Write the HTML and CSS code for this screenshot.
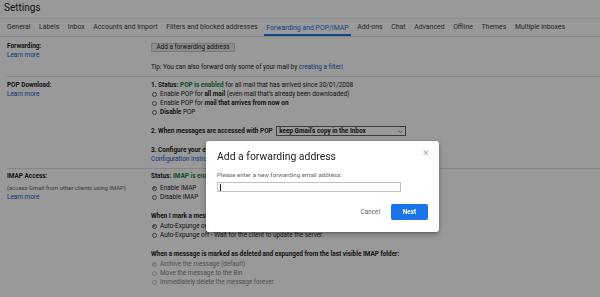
FILE: index.html
```html
<!DOCTYPE html>
<html>
<head>
<meta charset="utf-8">
<title>Settings</title>
<link rel="stylesheet" href="styles.css">
</head>
<body>
<div class="page">
  <div class="title">Settings</div>
  <nav class="tabs">
    <span class="tab">General</span>
    <span class="tab">Labels</span>
    <span class="tab">Inbox</span>
    <span class="tab">Accounts and Import</span>
    <span class="tab">Filters and blocked addresses</span>
    <span class="tab active">Forwarding and POP/IMAP</span>
    <span class="tab">Add-ons</span>
    <span class="tab">Chat</span>
    <span class="tab">Advanced</span>
    <span class="tab">Offline</span>
    <span class="tab">Themes</span>
    <span class="tab">Multiple inboxes</span>
  </nav>

  <section class="row row-fwd">
    <div class="label">
      <div class="line b">Forwarding:</div>
      <div class="line"><a class="link">Learn more</a></div>
    </div>
    <div class="content">
      <button class="btn">Add a forwarding address</button>
      <div class="line tip">Tip: You can also forward only some of your mail by <a class="link">creating a filter!</a></div>
    </div>
  </section>

  <section class="row row-pop">
    <div class="label">
      <div class="line b">POP Download:</div>
      <div class="line"><a class="link">Learn more</a></div>
    </div>
    <div class="content">
      <div class="line"><b>1. Status:</b> <span class="green">POP is enabled</span> for all mail that has arrived since 30/01/2008</div>
      <div class="line opt"><span class="radio"></span>Enable POP for&nbsp;<b>all mail</b>&nbsp;(even mail that's already been downloaded)</div>
      <div class="line opt"><span class="radio"></span>Enable POP for&nbsp;<b>mail that arrives from now on</b></div>
      <div class="line opt"><span class="radio"></span><b>Disable</b>&nbsp;POP</div>
      <div class="select-row"><b>2. When messages are accessed with POP</b>
        <span class="select">keep Gmail's copy in the Inbox
          <svg class="chev" viewBox="0 0 10 6" width="5" height="3"><path d="M1 1l4 4 4-4" fill="none" stroke="#5f6368" stroke-width="1.4"/></svg>
        </span>
      </div>
      <div class="line step3"><b>3. Configure your email client</b> (e.g. Outlook, Eudora, Netscape Mail)</div>
      <div class="line"><a class="link">Configuration instructions</a></div>
    </div>
  </section>

  <section class="row row-imap">
    <div class="label">
      <div class="line b">IMAP Access:</div>
      <div class="line small">(access Gmail from other clients using IMAP)</div>
      <div class="line"><a class="link">Learn more</a></div>
    </div>
    <div class="content">
      <div class="line status"><b>Status:</b> <span class="green">IMAP is enabled</span></div>
      <div class="line opt"><span class="radio on"></span>Enable IMAP</div>
      <div class="line opt"><span class="radio"></span>Disable IMAP</div>
      <div class="line b group">When I mark a message in IMAP as deleted:</div>
      <div class="line opt"><span class="radio on"></span>Auto-Expunge on - Immediately update the server. (default)</div>
      <div class="line opt"><span class="radio"></span>Auto-Expunge off - Wait for the client to update the server.</div>
      <div class="line b group">When a message is marked as deleted and expunged from the last visible IMAP folder:</div>
      <div class="line opt dis"><span class="radio on"></span>Archive the message (default)</div>
      <div class="line opt dis"><span class="radio"></span>Move the message to the Bin</div>
      <div class="line opt dis"><span class="radio"></span>Immediately delete the message forever</div>
    </div>
  </section>
</div>

<div class="scrim"></div>

<div class="dialog" role="dialog">
  <div class="dlg-head">
    <div class="dlg-title">Add a forwarding address</div>
    <button class="close" aria-label="Close">
      <svg viewBox="0 0 10 10" width="5.5" height="5.5"><path d="M1 1l8 8M9 1l-8 8" stroke="#5f6368" stroke-width="1.2" fill="none"/></svg>
    </button>
  </div>
  <div class="dlg-label">Please enter a new forwarding email address:</div>
  <div class="input"><span class="caret"></span></div>
  <div class="dlg-actions">
    <button class="cancel">Cancel</button>
    <button class="next">Next</button>
  </div>
</div>
</body>
</html>
```
FILE: styles.css
```css
* { box-sizing: border-box; }
html, body { margin: 0; padding: 0; }
body {
  width: 600px;
  height: 297px;
  overflow: hidden;
  background: #fff;
  font-family: Roboto, "Liberation Sans", Arial, sans-serif;
  font-size: 6.4px;
  color: #202124;
  position: relative;
}
b, .b { font-weight: 700; }
.link { color: #1155cc; text-decoration: none; }
.green { color: #188038; font-weight: 700; }

.title {
  height: 19px;
  padding-left: 4px;
  font-size: 10px;
  line-height: 15px;
  color: #202124;
  border-bottom: 1px solid #e8eaed;
}

.tabs {
  display: flex;
  gap: 3.6px;
  height: 18px;
  padding-left: 4.5px;
  border-bottom: 1px solid #e0e0e0;
  font-size: 6.9px;
  color: #3c4043;
}
.tab {
  padding: 0 2.5px;
  line-height: 17px;
  white-space: nowrap;
}
.tab.active {
  color: #1a73e8;
  border-bottom: 2px solid #1a73e8;
  line-height: 15px;
  padding-top: 2px;
}

.row {
  display: grid;
  grid-template-columns: 144px 1fr;
  margin-left: 7px;
}
.row + .row { border-top: 1px solid #e0e0e0; }
.line { line-height: 9.2px; white-space: nowrap; }
.row-fwd { padding: 5px 0 3.8px; }
.row-pop { padding: 4px 0 4.3px; }
.row-imap { padding: 3px 0 0; }

.btn {
  display: block;
  margin: 1px 0 0;
  height: 9px;
  width: 84px;
  padding: 0;
  border: 1px solid #c6c6c6;
  border-radius: 1px;
  background: #ececec;
  font: inherit;
  font-size: 6.4px;
  line-height: 7px;
  color: #202124;
  text-align: center;
}
.tip { margin-top: 10.5px; }

.opt { display: flex; align-items: center; }
.radio {
  width: 5px;
  height: 5px;
  border: 0.8px solid #5f6368;
  border-radius: 50%;
  margin: 0 3.5px 0 0.5px;
  flex: none;
  display: flex;
  align-items: center;
  justify-content: center;
}
.radio.on::after {
  content: "";
  width: 2.2px;
  height: 2.2px;
  border-radius: 50%;
  background: #5f6368;
}
.dis { color: #80868b; }
.dis .radio { border-color: #bdc1c6; }
.dis .radio.on::after { background: #bdc1c6; }

.select-row {
  display: flex;
  align-items: center;
  height: 10px;
  margin-top: 8.9px;
  white-space: nowrap;
}
.select {
  display: flex;
  align-items: center;
  justify-content: space-between;
  margin-left: 3px;
  width: 130px;
  height: 9.5px;
  border: 1px solid #5f6368;
  padding: 0 2px 0 2.5px;
  font-size: 6.4px;
  font-weight: 700;
}
.step3 { margin-top: 9.4px; }

.small { font-size: 5.9px; color: #5f6368; margin-top: 2px; }
.status { margin-bottom: 2px; }
.group { margin-top: 10.4px; }

.scrim {
  position: fixed;
  inset: 0;
  background: rgba(0, 0, 0, 0.4);
}

.dialog {
  position: fixed;
  left: 206px;
  top: 141px;
  width: 233px;
  height: 91px;
  background: #fff;
  border-radius: 3px;
  box-shadow: 0 2px 6px rgba(0,0,0,0.3), 0 1px 2px rgba(0,0,0,0.2);
  padding: 8px 10px 0 11px;
  display: flex;
  flex-direction: column;
}
.dlg-head {
  display: flex;
  justify-content: space-between;
  align-items: flex-start;
}
.dlg-title {
  font-size: 10.4px;
  line-height: 16px;
  color: #202124;
}
.close {
  border: 0;
  background: none;
  padding: 0;
  margin-top: 0.5px;
  width: 6px;
  height: 6px;
  display: flex;
}
.dlg-label {
  margin-top: 5.5px;
  font-size: 6.2px;
  line-height: 8px;
  color: #5f6368;
}
.input {
  margin-top: 3.5px;
  width: 184px;
  height: 10px;
  border: 1px solid #bdc1c6;
  display: flex;
  align-items: center;
  padding-left: 2px;
}
.caret {
  width: 0.8px;
  height: 7px;
  background: #202124;
}
.dlg-actions {
  display: flex;
  justify-content: flex-end;
  align-items: center;
  gap: 5px;
  margin-top: 11.5px;
  padding-right: 1px;
}
.cancel {
  border: 0;
  background: none;
  padding: 0 6px;
  height: 16px;
  font: inherit;
  font-size: 6.4px;
  color: #5f6368;
}
.next {
  border: 0;
  border-radius: 2px;
  background: #1a73e8;
  color: #fff;
  width: 37px;
  height: 16px;
  font: inherit;
  font-size: 6.4px;
  font-weight: 700;
}
```
